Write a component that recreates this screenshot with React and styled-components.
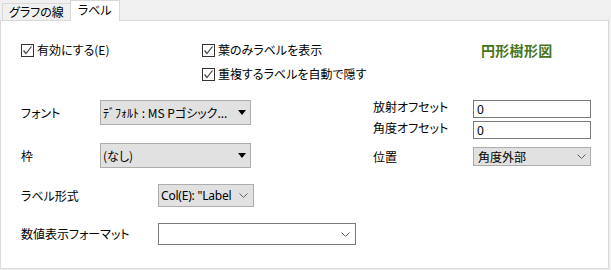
import React from "react";
import styled, { createGlobalStyle } from "styled-components";

const GlobalStyle = createGlobalStyle`
    html, body {
        margin: 0;
        padding: 0;
        background: #f0f0f0;
    }
    body {
        width: 611px;
        height: 270px;
        overflow: hidden;
        font-family: "Noto Sans CJK JP", "Noto Sans", sans-serif;
        font-size: 12px;
        color: #000000;
        font-feature-settings: "palt";
    }
`

const Window = styled.div`
    width: 611px;
    height: 270px;
    display: flex;
    flex-direction: column;
`
const TabBar = styled.div`
    height: 20px;
    display: flex;
    align-items: flex-end;
    padding-left: 2px;
    position: relative;
    z-index: 1;
`
const Tab = styled.div`
    box-sizing: border-box;
    height: ${({active}) => active ? '21px' : '17px'};
    margin-bottom: ${({active}) => active ? '-1px' : '0'};
    padding: ${({active}) => active ? '0 7px 2px' : '0 6px'};
    background: ${({active}) => active ? '#FFFFFF' : '#f0f0f0'};
    border: 1px solid #d9d9d9;
    border-bottom: none;
    margin-left: ${({active}) => active ? '-1px' : '0'};
    display: flex;
    align-items: center;
    font-size: 12px;
    line-height: 14px;
    white-space: nowrap;
`
const Panel = styled.div`
    box-sizing: border-box;
    width: 609px;
    height: 249px;
    background: #FFFFFF;
    border: 1px solid #d9d9d9;
    padding: 17px 0 0 20px;
`
const TopGrid = styled.div`
    display: grid;
    grid-template-columns: 181px 279px auto;
    grid-auto-rows: 24px;
    align-items: center;
`
const Check = styled.label`
    display: flex;
    align-items: center;
    gap: 3px;
    white-space: nowrap;
    line-height: 14px;
`
const Box = styled.span`
    box-sizing: border-box;
    width: 13px;
    height: 13px;
    border: 1px solid #333333;
    background: #FFFFFF;
    display: flex;
    align-items: center;
    justify-content: center;
`
const Title = styled.div`
    color: #477520;
    font-weight: bold;
    font-size: 14px;
    line-height: 16px;
    letter-spacing: 0.3px;
`
const Middle = styled.div`
    display: flex;
    align-items: flex-start;
    margin-top: 14px;
`
const Column = styled.div`
    display: flex;
    flex-direction: column;
    gap: ${({gap}) => gap}px;
    margin-left: ${({ml}) => ml || 0}px;
`
const Row = styled.div`
    display: flex;
    align-items: center;
    height: ${({h}) => h}px;
    margin-top: ${({mt}) => mt || 0}px;
`
const Label = styled.div`
    width: ${({w}) => w}px;
    flex: none;
    white-space: nowrap;
    line-height: 14px;
    position: relative;
    top: ${({up}) => up ? '-2px' : '0'};
`
const Select = styled.div`
    box-sizing: border-box;
    width: ${({w}) => w}px;
    height: 100%;
    display: flex;
    align-items: center;
    justify-content: space-between;
    padding: 0 ${({pr}) => pr}px 0 ${({pl}) => pl || 2}px;
    background: ${({plain}) => plain ? '#FFFFFF' : '#e1e1e1'};
    border: 1px solid ${({plain}) => plain ? '#7a7a7a' : '#adadad'};
    white-space: nowrap;
    line-height: 14px;
`
const Latin = styled.span`
    font-family: "Noto Sans", "Open Sans", sans-serif;
    font-size: 12px;
    letter-spacing: -0.2px;
`
const Triangle = styled.span`
    width: 0;
    height: 0;
    border-left: 4px solid transparent;
    border-right: 4px solid transparent;
    border-top: 5px solid #000000;
    flex: none;
`
const Input = styled.div`
    box-sizing: border-box;
    width: 118px;
    height: 100%;
    border: 1px solid #7a7a7a;
    background: #FFFFFF;
    padding-left: 3px;
    display: flex;
    align-items: center;
    font-family: "Noto Sans", sans-serif;
`
const Bottom = styled.div`
    display: flex;
    flex-direction: column;
    gap: 16px;
    margin-top: 16px;
`

const CheckMark = () => (
    <svg width="11" height="11" viewBox="0 0 11 11">
        <polyline points="1.5,5.5 4,8.5 9.5,1.5" fill="none" stroke="#444444" strokeWidth="1.2" />
    </svg>
)

const Chevron = () => (
    <svg width="9" height="5" viewBox="0 0 9 5">
        <polyline points="0.5,0.5 4.5,4.5 8.5,0.5" fill="none" stroke="#606060" strokeWidth="1" />
    </svg>
)

const Checkbox = ({ children }) => (
    <Check><Box><CheckMark /></Box>{children}</Check>
)

export default function App() {
    return (
        <>
            <GlobalStyle />
            <Window>
                <TabBar>
                    <Tab>グラフの線</Tab>
                    <Tab active>ラベル</Tab>
                </TabBar>
                <Panel>
                    <TopGrid>
                        <Checkbox>有効にする(E)</Checkbox>
                        <Checkbox>葉のみラベルを表示</Checkbox>
                        <Title>円形樹形図</Title>
                        <span />
                        <Checkbox>重複するラベルを自動で隠す</Checkbox>
                    </TopGrid>
                    <Middle>
                        <Column gap={18}>
                            <Row h={25}>
                                <Label w={79}>フォント</Label>
                                <Select w={151} pr={4}>
                                    <span>ﾃﾞﾌｫﾙﾄ : MS Pゴシック...</span>
                                    <Triangle />
                                </Select>
                            </Row>
                            <Row h={25}>
                                <Label w={79}>枠</Label>
                                <Select w={151} pr={4}>
                                    <span>(なし)</span>
                                    <Triangle />
                                </Select>
                            </Row>
                        </Column>
                        <Column gap={3} ml={122}>
                            <Row h={18}>
                                <Label w={100} up>放射オフセット</Label>
                                <Input>0</Input>
                            </Row>
                            <Row h={18}>
                                <Label w={100} up>角度オフセット</Label>
                                <Input>0</Input>
                            </Row>
                            <Row h={19} mt={5}>
                                <Label w={100}>位置</Label>
                                <Select w={118} pr={4} pl={4}>
                                    <span>角度外部</span>
                                    <Chevron />
                                </Select>
                            </Row>
                        </Column>
                    </Middle>
                    <Bottom>
                        <Row h={23}>
                            <Label w={137}>ラベル形式</Label>
                            <Select w={96} pr={5}>
                                <Latin>Col(E): "Label</Latin>
                                <Chevron />
                            </Select>
                        </Row>
                        <Row h={22}>
                            <Label w={137}>数値表示フォーマット</Label>
                            <Select w={198} pr={5} plain>
                                <span />
                                <Chevron />
                            </Select>
                        </Row>
                    </Bottom>
                </Panel>
            </Window>
        </>
    )
}
